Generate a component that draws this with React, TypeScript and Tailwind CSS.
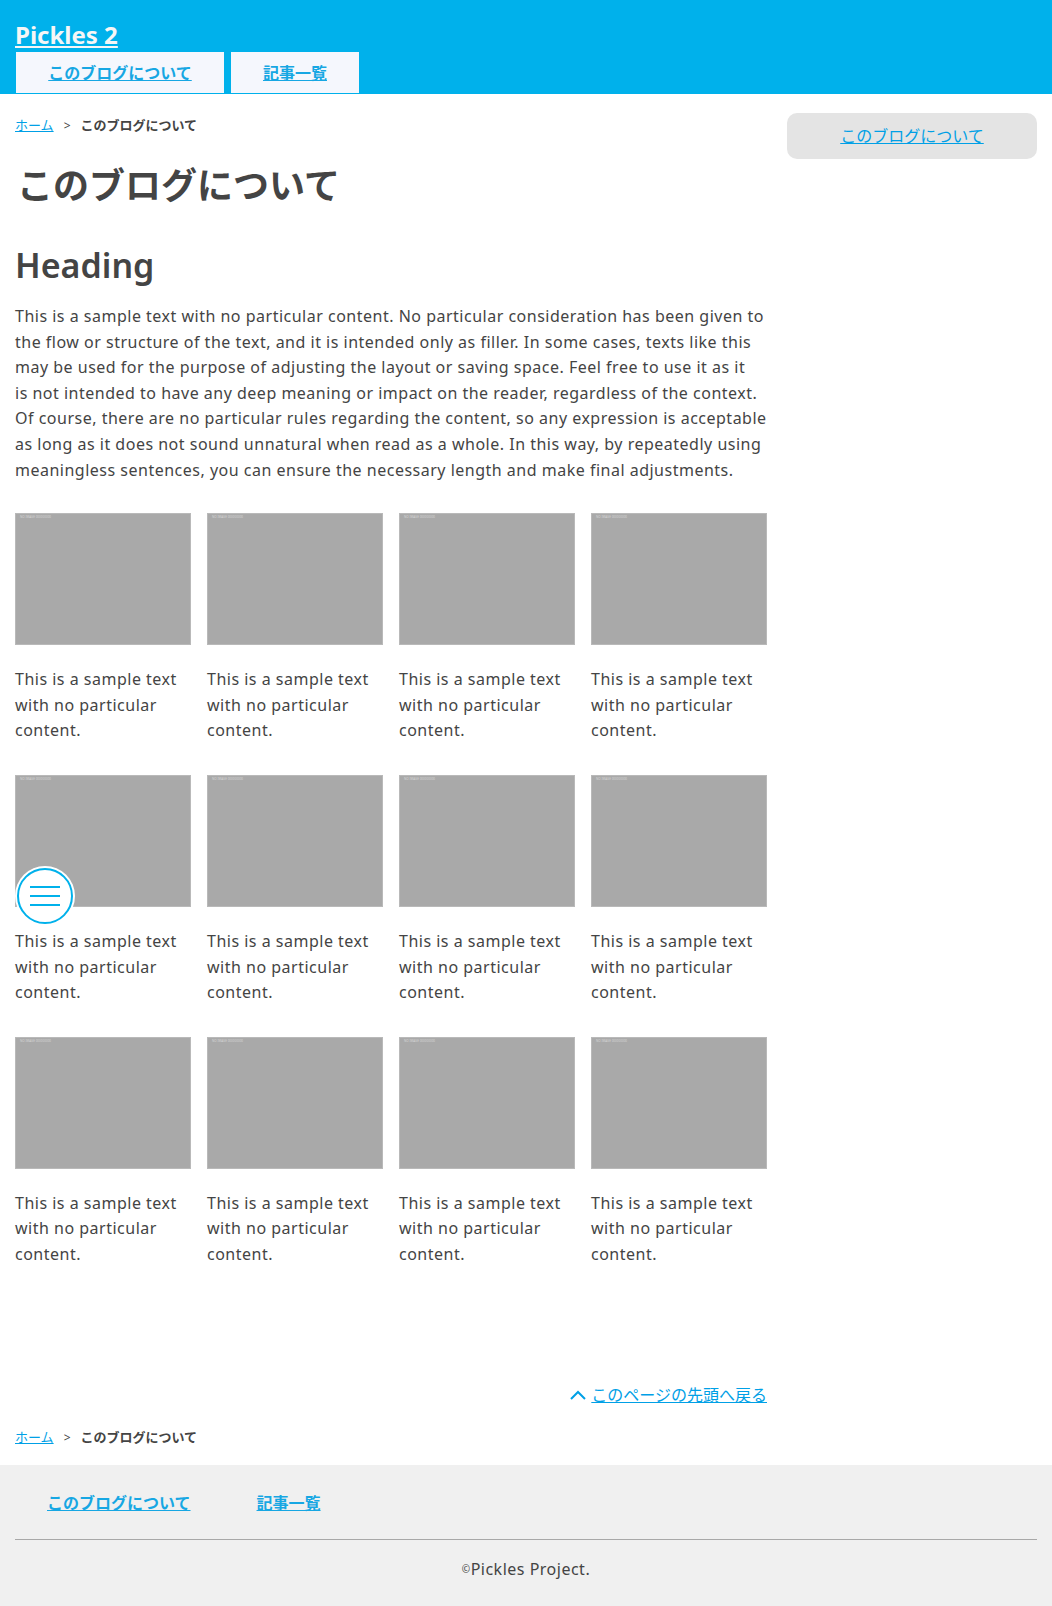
const font = { fontFamily: '"Noto Sans", "Noto Sans CJK JP", sans-serif' }

const cards = Array.from({ length: 12 })

const lines = [
  'This is a sample text with no particular content. No particular consideration has been given to',
  'the flow or structure of the text, and it is intended only as filler. In some cases, texts like this',
  'may be used for the purpose of adjusting the layout or saving space. Feel free to use it as it',
  'is not intended to have any deep meaning or impact on the reader, regardless of the context.',
  'Of course, there are no particular rules regarding the content, so any expression is acceptable',
  'as long as it does not sound unnatural when read as a whole. In this way, by repeatedly using',
  'meaningless sentences, you can ensure the necessary length and make final adjustments.',
]

const Breadcrumb: React.FC = () => {
  return (
    <div className="flex items-center text-[13px] leading-[21px] text-[#444]">
      <a href="#" className="text-[#00a0e6] underline">ホーム</a>
      <span className="mx-[10px] text-[12px]">&gt;</span>
      <span className="font-bold">このブログについて</span>
    </div>
  )
}

const Card: React.FC = () => {
  return (
    <div>
      <div className="relative h-[132px] w-full border border-[#b9b9b9] bg-[#a9a9a9]">
        <span className="absolute left-[4px] top-[1px] text-[3px] leading-[4px] text-[#d6d6d6]">NO IMAGE 000000000</span>
      </div>
      <p className="mt-[22px] text-[16px] leading-[25.6px] tracking-[0.5px] text-[#444]">This is a sample text with no particular content.</p>
    </div>
  )
}

export default function App() {
  return (
    <div className="relative flex min-h-[1606px] flex-col bg-white" style={font}>
      <header className="h-[94px] bg-[#00b1eb] px-[15px] pt-[20px]">
        <a href="#" className="block w-fit text-[24px] leading-[30px] font-bold text-[#f6f6f6] underline">Pickles 2</a>
        <nav className="mt-[2px] flex gap-[7px] pl-[1px]">
          <a href="#" className="flex h-[41px] w-[208px] items-center justify-center bg-[#f5f7fd] text-[16px] font-bold text-[#17a7e3] underline">このブログについて</a>
          <a href="#" className="flex h-[41px] w-[128px] items-center justify-center bg-[#f5f7fd] text-[16px] font-bold text-[#17a7e3] underline">記事一覧</a>
        </nav>
      </header>

      <div className="flex gap-[20px] px-[15px]">
        <main className="w-[752px]">
          <div className="pt-[21px]">
            <Breadcrumb />
          </div>
          <h1 className="mt-[28px] pl-[2px] text-[36px] leading-[44px] font-bold text-[#444]">このブログについて</h1>
          <h2 className="mt-[35px] text-[34px] leading-[44px] font-semibold text-[#444]">Heading</h2>
          <p className="mt-[17px] text-[16px] leading-[25.6px] tracking-[0.5px] whitespace-nowrap text-[#444]">
            {lines.map((line, i) => (
              <span key={i} className="block">{line}</span>
            ))}
          </p>
          <div className="mt-[30px] grid grid-cols-4 gap-x-[16px] gap-y-[31px]">
            {cards.map((_, i) => (
              <Card key={i} />
            ))}
          </div>
          <div className="mt-[116px] flex justify-end">
            <a href="#" className="flex items-center gap-[5px] text-[16px] leading-[22px] text-[#00a0e6]">
              <svg width="16" height="10" viewBox="0 0 16 10" fill="none" stroke="currentColor" strokeWidth="2">
                <path d="M1 9 L8 2 L15 9" />
              </svg>
              <span className="underline">このページの先頭へ戻る</span>
            </a>
          </div>
          <div className="mt-[21px] pb-[17px]">
            <Breadcrumb />
          </div>
        </main>
        <aside className="w-[250px] pt-[19px]">
          <div className="flex h-[46px] items-center justify-center rounded-[10px] bg-[#e4e4e4]">
            <a href="#" className="text-[16px] text-[#00a0e6] underline">このブログについて</a>
          </div>
        </aside>
      </div>

      <footer className="flex-1 bg-[#f0f0f0] px-[15px] pt-[26px]">
        <nav className="flex">
          <a href="#" className="px-[32px] text-[16px] leading-[24px] font-bold text-[#17a7e3] underline">このブログについて</a>
          <a href="#" className="ml-[2px] px-[32px] text-[16px] leading-[24px] font-bold text-[#17a7e3] underline">記事一覧</a>
        </nav>
        <hr className="mt-[24px] border-0 border-t border-[#a8a8a8]" />
        <p className="pt-[18px] pb-[22px] text-center text-[16px] leading-[22px] tracking-[0.5px] text-[#444]">
          <span className="text-[10px] align-[2px]">©</span>Pickles Project.
        </p>
      </footer>

      <button className="absolute left-[15px] top-[866px] flex h-[60px] w-[60px] items-center justify-center rounded-full bg-white">
        <span className="flex h-[56px] w-[56px] flex-col items-center justify-center gap-[7px] rounded-full border-2 border-[#00b1eb]">
          <span className="block h-[2px] w-[30px] bg-[#00b1eb]" />
          <span className="block h-[2px] w-[30px] bg-[#00b1eb]" />
          <span className="block h-[2px] w-[30px] bg-[#00b1eb]" />
        </span>
      </button>
    </div>
  )
}
